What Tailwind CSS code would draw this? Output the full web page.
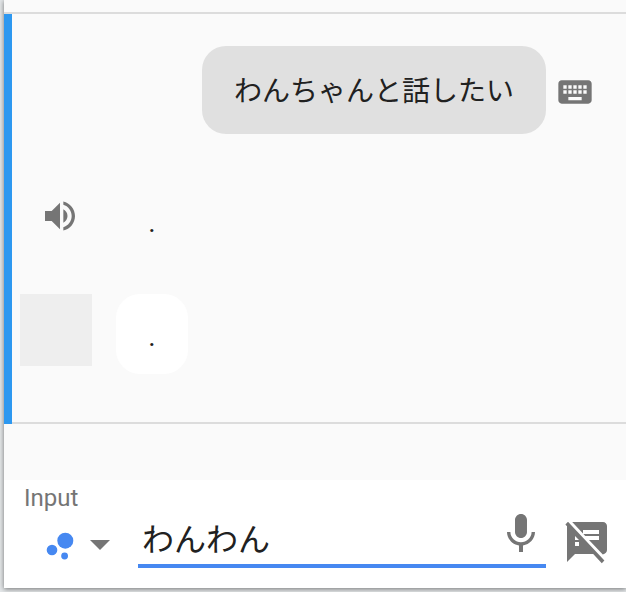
<!DOCTYPE html>
<html lang="ja">
<head>
  <meta charset="utf-8">
  <meta name="viewport" content="width=device-width, initial-scale=1.0">
  <title>Simulator</title>
  <script src="https://cdn.jsdelivr.net/npm/@tailwindcss/browser@4"></script>
</head>

<body class="bg-[#e4e7e9] font-['Roboto','Noto_Sans_CJK_JP',sans-serif] text-[#212121] min-h-screen pl-1 pb-1 flex flex-col overflow-hidden">
  <div class="grow flex flex-col bg-[#fafafa] shadow-[0_1px_5px_rgba(0,0,0,0.5)]">
    <!-- Conversation -->
    <main class="grow">
      <div class="h-3"></div>
      <section class="border-t-2 border-[#dcdcdc]">
        <div class="flex">
          <div class="w-2 bg-[#2d98f0]"></div>
          <div class="grow border-b-2 border-[#dcdcdc] pt-8 pb-12 pl-2">
            <!-- User query -->
            <div class="flex items-center justify-end gap-[9px] pr-[31px]">
              <p class="bg-[#e0e0e0] rounded-3xl px-8 pt-[26px] pb-[22px] text-[28px] leading-10">わんちゃんと話したい</p>
              <svg class="size-10 mt-1" viewBox="0 0 24 24" fill="#757575" role="img" aria-label="Typed">
                <path d="M20 5H4c-1.1 0-1.99.9-1.99 2L2 17c0 1.1.9 2 2 2h16c1.1 0 2-.9 2-2V7c0-1.1-.9-2-2-2zm-9 3h2v2h-2V8zm0 3h2v2h-2v-2zM8 8h2v2H8V8zm0 3h2v2H8v-2zm-1 2H5v-2h2v2zm0-3H5V8h2v2zm9 7H8v-2h8v2zm0-4h-2v-2h2v2zm0-3h-2V8h2v2zm3 3h-2v-2h2v2zm0-3h-2V8h2v2z"/>
              </svg>
            </div>

            <!-- Spoken reply -->
            <div class="flex gap-9 pt-[62px] pl-5">
              <button type="button" class="size-10" aria-label="Play response">
                <svg class="size-10" viewBox="0 0 24 24" fill="#757575">
                  <path d="M3 9v6h4l5 5V4L7 9H3zm13.5 3c0-1.77-1.02-3.29-2.5-4.03v8.05c1.48-.73 2.5-2.25 2.5-4.02zM14 3.23v2.06c2.89.86 5 3.54 5 6.71s-2.11 5.85-5 6.71v2.06c4.01-.91 7-4.49 7-8.77s-2.99-7.86-7-8.77z"/>
                </svg>
              </button>
              <p class="w-[72px] h-10 text-center text-[28px] leading-10 pt-[7px]">.</p>
            </div>

            <!-- Displayed reply -->
            <div class="flex gap-6 pt-[58px]">
              <div class="size-[72px] bg-[#eee]"></div>
              <p class="w-[72px] bg-white rounded-3xl pt-[23px] pb-[17px] text-center text-[28px] leading-10">.</p>
            </div>
          </div>
        </div>
      </section>
    </main>

    <!-- Input bar -->
    <form class="h-[108px] bg-white pl-5 pt-[6px]">
      <label for="query" class="block text-2xl leading-6 text-[#757575]">Input</label>
      <div class="flex">
        <button type="button" class="flex items-center shrink-0 h-[70px] pl-5 gap-[10px] w-[114px]" aria-label="Choose surface">
          <svg class="w-9 h-10" viewBox="0 0 36 40" fill="#4688f1">
            <circle cx="21.3" cy="15.7" r="8"/>
            <circle cx="8" cy="25" r="5.3"/>
            <circle cx="20.6" cy="31" r="3.4"/>
          </svg>
          <svg class="w-5 h-[10px]" viewBox="0 0 20 10" fill="#757575">
            <path d="M0 0h20L10 10z"/>
          </svg>
        </button>
        <div class="grow min-w-0 flex border-b-4 border-[#4688f1] h-[58px]">
          <input id="query" type="text" value="わんわん" class="grow min-w-0 pl-1 pt-[5px] text-[32px] outline-none">
          <button type="button" class="size-12 shrink-0 mr-px" aria-label="Speak">
            <svg class="size-12" viewBox="0 0 24 24" fill="#757575">
              <path d="M12 14c1.66 0 2.99-1.34 2.99-3L15 5c0-1.66-1.34-3-3-3S9 3.34 9 5v6c0 1.66 1.34 3 3 3zm5.3-3c0 3-2.54 5.1-5.3 5.1S6.7 14 6.7 11H5c0 3.41 2.72 6.23 6 6.72V21h2v-3.28c3.28-.48 6-3.3 6-6.72h-1.7z"/>
            </svg>
          </button>
        </div>
        <button type="button" class="size-12 shrink-0 ml-[17px] mt-2 mr-[15px]" aria-label="Mute responses">
          <svg class="size-12" viewBox="0 0 24 24" fill="#757575">
            <path d="M4.6 2H20c1.1 0 2 .9 2 2v12c0 1-.8 1.9-2.1 2.2L13 11h5V9h-6.9l-.9-1H18V6h-8v1.8L4.6 2z"/>
            <path d="M2.5 1.9L1.2 3.2l.8.9V22l4-4h9.1l4.3 4.6 1.3-1.3L2.5 1.9zM6 9l2 2H6V9zm0 3h2v2H6v-2z"/>
          </svg>
        </button>
      </div>
    </form>
  </div>
</body>
</html>
